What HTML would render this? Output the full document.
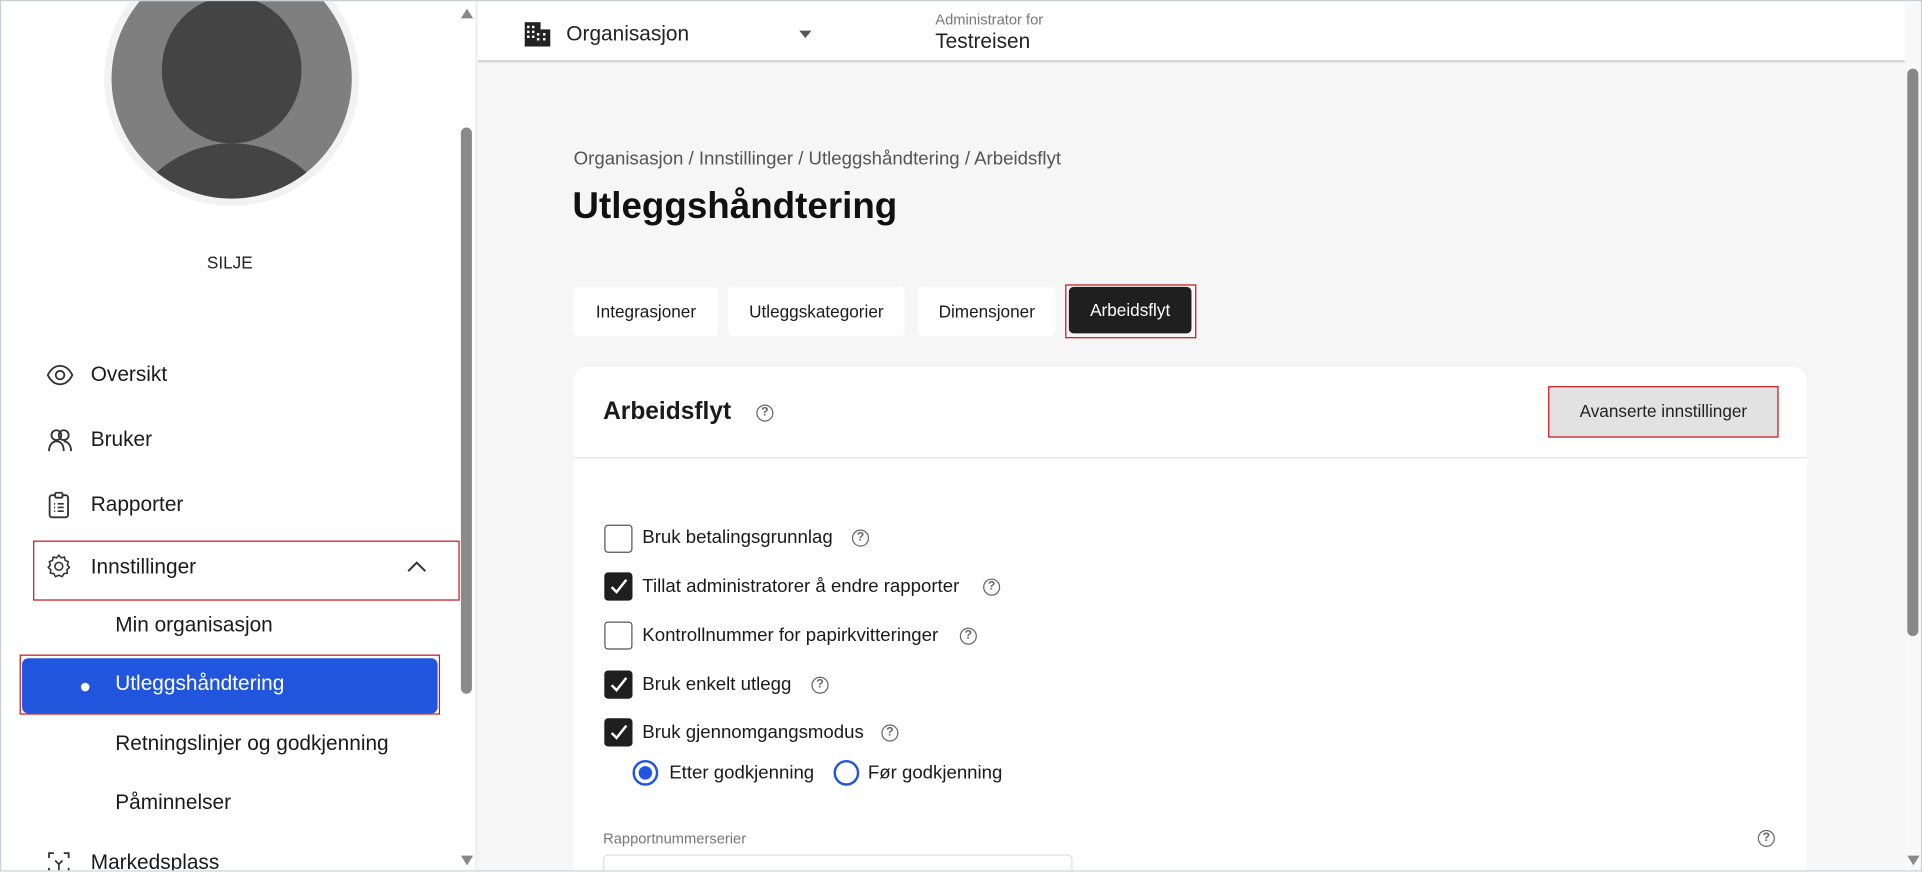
<!DOCTYPE html>
<html><head><meta charset="utf-8"><style>
*{box-sizing:border-box;margin:0;padding:0}
html,body{width:1922px;height:871px;overflow:hidden;background:#fff}
#w{position:absolute;left:0;top:0;width:1568px;height:711px;transform:scale(1.22577);transform-origin:0 0;font-family:"Liberation Sans",Arial,sans-serif;color:#111;border:1px solid #c9d0d4;overflow:hidden;background:#f6f6f6}
.a{position:absolute;white-space:nowrap}
.nav{font-size:17px;color:#1a1a1a}
.q{position:absolute;width:14px;height:14px;border:1.3px solid #666;border-radius:50%;font-size:10px;line-height:12px;text-align:center;color:#666;font-weight:bold}
.cb{position:absolute;left:492px;width:23px;height:23px;border:1.3px solid #555;border-radius:3px;background:#fff}
.cb.on{background:#1f1f1f;border-color:#1f1f1f}
.cb.on svg{position:absolute;left:3px;top:3px}
.lbl{position:absolute;left:523px;font-size:15.2px;color:#1a1a1a}
.tab{position:absolute;top:233px;height:40px;background:#fff;border-radius:4px;font-size:14px;line-height:40px;text-align:center;color:#1a1a1a}
</style></head><body><div id="w">
<div class="a" style="left:0;top:0;width:373px;height:711px;background:#fff"></div>
<div class="a" style="left:373px;top:0;width:15px;height:711px;background:#fff;border-right:1px solid #e6e6e6"></div>
<div class="a" style="left:375px;top:103px;width:9px;height:462px;background:#8a8a8a;border-radius:5px"></div>
<div class="a" style="left:375px;top:6px;width:0;height:0;border-left:5px solid transparent;border-right:5px solid transparent;border-bottom:8px solid #888"></div>
<div class="a" style="left:375px;top:697px;width:0;height:0;border-left:5px solid transparent;border-right:5px solid transparent;border-top:8px solid #888"></div>
<svg class="a" style="left:80px;top:-45px" width="216" height="216" viewBox="0 0 216 216">
<defs><clipPath id="c"><circle cx="108" cy="108" r="98"/></clipPath></defs>
<circle cx="108" cy="108" r="104" fill="#f2f2f2"/>
<circle cx="108" cy="108" r="98" fill="#7f7f7f"/>
<g clip-path="url(#c)"><ellipse cx="108" cy="101" rx="57" ry="60" fill="#444"/><ellipse cx="108" cy="250" rx="90" ry="89" fill="#444"/></g>
</svg>
<div class="a" style="left:0;width:373px;top:205px;text-align:center;font-size:14px;color:#222">SILJE</div>
<svg class="a" style="left:37px;top:296px" width="22" height="18" viewBox="0 0 22 18"><path d="M1 9C4 3 8 1.5 11 1.5S18 3 21 9C18 15 14 16.5 11 16.5S4 15 1 9Z" fill="none" stroke="#333" stroke-width="1.5"/><circle cx="11" cy="9" r="3.5" fill="none" stroke="#333" stroke-width="1.5"/></svg>
<div class="a nav" style="left:73px;top:295px">Oversikt</div>
<svg class="a" style="left:37px;top:348px" width="22" height="20" viewBox="0 0 22 20"><circle cx="8" cy="6" r="4" fill="none" stroke="#333" stroke-width="1.5"/><circle cx="14" cy="6" r="4" fill="none" stroke="#333" stroke-width="1.5"/><path d="M2 19c0-5 3-8 6-8M20 19c0-5-3-8-6-8M8 11c3 0 6 2 6 8" fill="none" stroke="#333" stroke-width="1.5"/></svg>
<div class="a nav" style="left:73px;top:348px">Bruker</div>
<svg class="a" style="left:38px;top:400px" width="18" height="22" viewBox="0 0 18 22"><rect x="1.5" y="3" width="15" height="18" rx="2" fill="none" stroke="#333" stroke-width="1.5"/><rect x="6" y="1" width="6" height="4" rx="1" fill="#fff" stroke="#333" stroke-width="1.5"/><path d="M5 10h1M5 13h1M5 16h1M8 10h5M8 13h5M8 16h5" stroke="#333" stroke-width="1.3"/></svg>
<div class="a nav" style="left:73px;top:401px">Rapporter</div>
<div class="a" style="left:26px;top:440px;width:348px;height:49px;border:1.5px solid #c8161d"></div>
<svg class="a" style="left:36px;top:450px" width="22" height="22" viewBox="0 0 24 24"><path d="M12 2l2 2.5 3-.8.6 3 2.9 1.2-1 2.9L21.5 13l-2.3 2 .4 3.1-3.1.4-1.5 2.7L12 19.9 9 21.2l-1.5-2.7-3.1-.4.4-3.1L2.5 13l2-2.2-1-2.9 2.9-1.2.6-3 3 .8Z" fill="none" stroke="#333" stroke-width="1.4" stroke-linejoin="round"/><circle cx="12" cy="12" r="3.5" fill="none" stroke="#333" stroke-width="1.4"/></svg>
<div class="a nav" style="left:73px;top:452px">Innstillinger</div>
<svg class="a" style="left:331px;top:456px" width="16" height="10" viewBox="0 0 16 10"><path d="M1 9l7-7 7 7" fill="none" stroke="#333" stroke-width="1.6"/></svg>
<div class="a nav" style="left:93px;top:499px">Min organisasjon</div>
<div class="a" style="left:15px;top:533px;width:343px;height:49px;border:1.5px solid #c8161d"></div>
<div class="a" style="left:17px;top:536px;width:339px;height:45px;background:#2255dd;border-radius:5px"></div>
<div class="a" style="left:65px;top:556px;width:7px;height:7px;border-radius:50%;background:#fff"></div>
<div class="a nav" style="left:93px;top:547px;color:#fff">Utleggshåndtering</div>
<div class="a nav" style="left:93px;top:596px">Retningslinjer og godkjenning</div>
<div class="a nav" style="left:93px;top:644px">Påminnelser</div>
<svg class="a" style="left:37px;top:693px" width="20" height="20" viewBox="0 0 20 20"><path d="M2 6V2h4M14 2h4v4M2 14v4h4M18 14v4h-4" fill="none" stroke="#333" stroke-width="1.5"/><path d="M7 8l3 3 3-3M10 11v5" fill="none" stroke="#333" stroke-width="1.4"/></svg>
<div class="a nav" style="left:73px;top:693px">Markedsplass</div>
<div class="a" style="left:389px;top:0;width:1164px;height:50px;background:#fff;border-bottom:2px solid #d6d6d6"></div>
<svg class="a" style="left:427px;top:17px" width="21" height="20" viewBox="0 0 21 20"><rect x="0" y="0" width="13" height="20" fill="#222"/><rect x="13" y="6" width="8" height="14" fill="#222"/><g fill="#fff"><rect x="2" y="3" width="2" height="2"/><rect x="6" y="3" width="2" height="2"/><rect x="2" y="7" width="2" height="2"/><rect x="6" y="7" width="2" height="2"/><rect x="2" y="11" width="2" height="2"/><rect x="6" y="11" width="2" height="2"/><rect x="15" y="9" width="2" height="2"/><rect x="15" y="13" width="2" height="2"/><rect x="10" y="9" width="2" height="2"/><rect x="10" y="13" width="2" height="2"/></g></svg>
<div class="a" style="left:461px;top:17px;font-size:17px;color:#222">Organisasjon</div>
<div class="a" style="left:651px;top:24px;border-left:5px solid transparent;border-right:5px solid transparent;border-top:6px solid #555"></div>
<div class="a" style="left:762px;top:8px;font-size:12px;color:#777">Administrator for</div>
<div class="a" style="left:762px;top:23px;font-size:17px;color:#222">Testreisen</div>
<div class="a" style="left:1553px;top:0;width:15px;height:711px;background:#f8f8f8"></div>
<div class="a" style="left:1555px;top:55px;width:9px;height:463px;background:#888;border-radius:5px"></div>
<div class="a" style="left:1555px;top:697px;border-left:5px solid transparent;border-right:5px solid transparent;border-top:8px solid #888"></div>
<div class="a" style="left:467px;top:120px;font-size:15.2px;color:#555">Organisasjon / Innstillinger / Utleggshåndtering / Arbeidsflyt</div>
<div class="a" style="left:466px;top:151px;font-size:30px;font-weight:bold;color:#111">Utleggshåndtering</div>
<div class="tab" style="left:467px;width:118px">Integrasjoner</div>
<div class="tab" style="left:593px;width:144px">Utleggskategorier</div>
<div class="tab" style="left:748px;width:112px">Dimensjoner</div>
<div class="a" style="left:868px;top:231px;width:107px;height:44px;border:1.5px solid #c8161d"></div>
<div class="tab" style="left:871px;width:100px;top:233px;height:38px;line-height:38px;background:#1f1f1f;color:#fff">Arbeidsflyt</div>
<div class="a" style="left:467px;top:298px;width:1006px;height:420px;background:#fff;border-radius:12px"></div>
<div class="a" style="left:467px;top:372px;width:1006px;height:1px;background:#e2e2e2"></div>
<div class="a" style="left:491px;top:324px;font-size:20px;font-weight:bold;color:#1a1a1a">Arbeidsflyt</div>
<div class="q" style="left:616px;top:329px">?</div>
<div class="a" style="left:1262px;top:314px;width:188px;height:42px;border:1.5px solid #c8161d;background:#e2e2e2;font-size:14px;line-height:39px;text-align:center;color:#222">Avanserte innstillinger</div>
<div class="cb" style="top:427px"></div><div class="lbl" style="top:429px">Bruk betalingsgrunnlag</div><div class="q" style="left:694px;top:431px">?</div>
<div class="cb on" style="top:466px"><svg width="16" height="16" viewBox="0 0 16 16"><path d="M2 8l4 4 8-10" fill="none" stroke="#fff" stroke-width="2"/></svg></div><div class="lbl" style="top:469px">Tillat administratorer å endre rapporter</div><div class="q" style="left:801px;top:471px">?</div>
<div class="cb" style="top:506px"></div><div class="lbl" style="top:509px">Kontrollnummer for papirkvitteringer</div><div class="q" style="left:782px;top:511px">?</div>
<div class="cb on" style="top:546px"><svg width="16" height="16" viewBox="0 0 16 16"><path d="M2 8l4 4 8-10" fill="none" stroke="#fff" stroke-width="2"/></svg></div><div class="lbl" style="top:549px">Bruk enkelt utlegg</div><div class="q" style="left:661px;top:551px">?</div>
<div class="cb on" style="top:585px"><svg width="16" height="16" viewBox="0 0 16 16"><path d="M2 8l4 4 8-10" fill="none" stroke="#fff" stroke-width="2"/></svg></div><div class="lbl" style="top:588px">Bruk gjennomgangsmodus</div><div class="q" style="left:718px;top:590px">?</div>
<div class="a" style="left:515px;top:619px;width:21px;height:21px;border:2px solid #2255dd;border-radius:50%"></div>
<div class="a" style="left:520px;top:624px;width:11px;height:11px;background:#2255dd;border-radius:50%"></div>
<div class="lbl" style="left:545px;top:621px">Etter godkjenning</div>
<div class="a" style="left:679px;top:619px;width:21px;height:21px;border:2px solid #2255dd;border-radius:50%"></div>
<div class="lbl" style="left:707px;top:621px">Før godkjenning</div>
<div class="a" style="left:491px;top:676px;font-size:12px;color:#777">Rapportnummerserier</div>
<div class="q" style="left:1433px;top:676px">?</div>
<div class="a" style="left:491px;top:696px;width:383px;height:30px;border:1px solid #ddd;border-radius:4px;background:#fff"></div>
</div></body></html>
